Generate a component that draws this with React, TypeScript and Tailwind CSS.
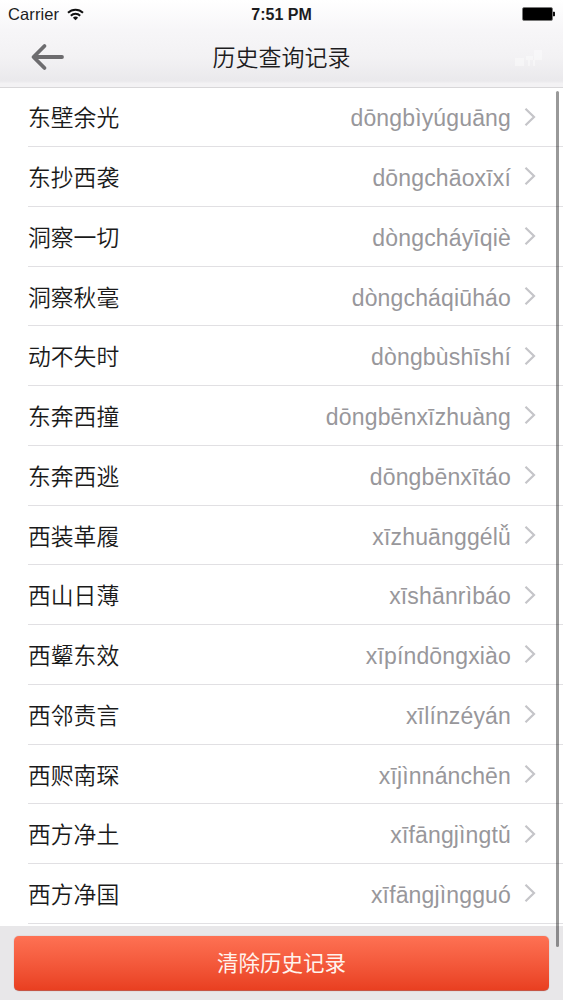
import React from 'react';

const records = [
  { word: '东壁余光', pinyin: 'dōngbìyúguāng' },
  { word: '东抄西袭', pinyin: 'dōngchāoxīxí' },
  { word: '洞察一切', pinyin: 'dòngcháyīqiè' },
  { word: '洞察秋毫', pinyin: 'dòngcháqiūháo' },
  { word: '动不失时', pinyin: 'dòngbùshīshí' },
  { word: '东奔西撞', pinyin: 'dōngbēnxīzhuàng' },
  { word: '东奔西逃', pinyin: 'dōngbēnxītáo' },
  { word: '西装革履', pinyin: 'xīzhuānggélǚ' },
  { word: '西山日薄', pinyin: 'xīshānrìbáo' },
  { word: '西颦东效', pinyin: 'xīpíndōngxiào' },
  { word: '西邻责言', pinyin: 'xīlínzéyán' },
  { word: '西赆南琛', pinyin: 'xījìnnánchēn' },
  { word: '西方净土', pinyin: 'xīfāngjìngtǔ' },
  { word: '西方净国', pinyin: 'xīfāngjìngguó' },
];

const StatusBar: React.FC = () => {
  return <div className="grid h-[29px] grid-cols-3 items-center px-[8px] leading-none text-[#1c1c1e]">
      <div className="flex items-center gap-[8px]">
        <span className="text-[16.5px] tracking-[0.1px]">Carrier</span>
        <svg className="-mt-[1px]" width="17" height="13" viewBox="0 0 17 13" fill="none" stroke="#111" strokeWidth="2">
          <path d="M1 4.8a10.7 10.7 0 0 1 15 0" />
          <path d="M3.8 7.7a6.8 6.8 0 0 1 9.4 0" />
          <path d="M8.5 12.3 5.9 9.8a3.8 3.8 0 0 1 5.2 0z" fill="#111" stroke="none" />
        </svg>
      </div>
      <div className="text-center text-[16px] font-bold">7:51 PM</div>
      <svg className="-mt-[1px] justify-self-end" width="34" height="14" viewBox="0 0 34 14">
        <rect x="1.5" y="0.5" width="30" height="13" rx="1.5" fill="#000" stroke="#777" strokeWidth="0.8" />
        <path d="M32.5 5v4a2 2 0 0 0 0-4z" fill="#111" stroke="#111" />
      </svg>
    </div>;
};

const Header: React.FC = () => {
  return <header className="h-[88px] shrink-0 border-b border-[#d8d7d9] bg-[linear-gradient(#ffffff_0%,#f7f6f8_35%,#f3f2f4_65%,#eae9ec_93%,#f3f2f4_96%,#f3f2f4_100%)]">
      <StatusBar />
      <div className="grid h-[57px] grid-cols-[80px_1fr_80px] items-center">
        <svg className="mb-[2px] ml-[30px]" width="36" height="28" viewBox="0 0 36 28" fill="none" stroke="#6d6c6f" strokeWidth="3.8" strokeLinecap="round" strokeLinejoin="round">
          <path d="M14.5 3 3.5 14l11 11M4 14h28" />
        </svg>
        <h1 className="pt-[2px] text-center text-[23px] font-[350] leading-none text-[#1d1c1e]">历史查询记录</h1>
        <svg className="ml-[31px] opacity-40" width="30" height="18" viewBox="0 0 30 18" fill="#fff">
          <path d="M1 9h9v8H1zM12 7h7v4h-7zM14 11h2v6h-2zM19 11h2v6h-2zM20 1h8v10h-8z" />
        </svg>
      </div>
    </header>;
};

const Chevron: React.FC = () => {
  return <svg width="13" height="20" viewBox="0 0 13 20" fill="none" stroke="#c5c5c9" strokeWidth="2.2">
      <path d="M1.5 1.8 10 10l-8.5 8.2" />
    </svg>;
};

const App: React.FC = () => {
  return <div className="relative flex h-[1000px] w-[563px] flex-col overflow-hidden bg-white font-['Liberation_Sans','Noto_Sans_CJK_SC',sans-serif]">
      <Header />
      <ul className="-mt-[0.7px] min-h-0 flex-1 overflow-hidden pl-[28px]">
        {records.map(item => <li key={item.word} className="flex h-[59.75px] items-center border-b border-[#e1e0e3] pr-[26px]">
            <span className="flex-1 pt-[4.4px] text-[22.8px] font-[350] leading-none text-[#1a1a1a]">{item.word}</span>
            <span className="mr-[13px] pt-[4.4px] text-[23px] leading-none tracking-[0.15px] text-[#98979b]">{item.pinyin}</span>
            <Chevron />
          </li>)}
      </ul>
      <footer className="flex h-[74px] shrink-0 items-start bg-[#e8e7e9] px-[14px] pt-[10px]">
        <button className="h-[55px] w-full rounded-[5px] border-b border-[#c65545] bg-gradient-to-b from-[#fe7153] to-[#e93f20] pt-[4px] text-[21.5px] leading-none text-[#fff3ed] shadow-[0_0_1px_#a08080]">清除历史记录</button>
      </footer>
      {/* scroll indicator */}
      <div className="absolute right-[4px] top-[91px] h-[856px] w-[3px] rounded-full bg-black/40" />
    </div>;
};

export default App;
